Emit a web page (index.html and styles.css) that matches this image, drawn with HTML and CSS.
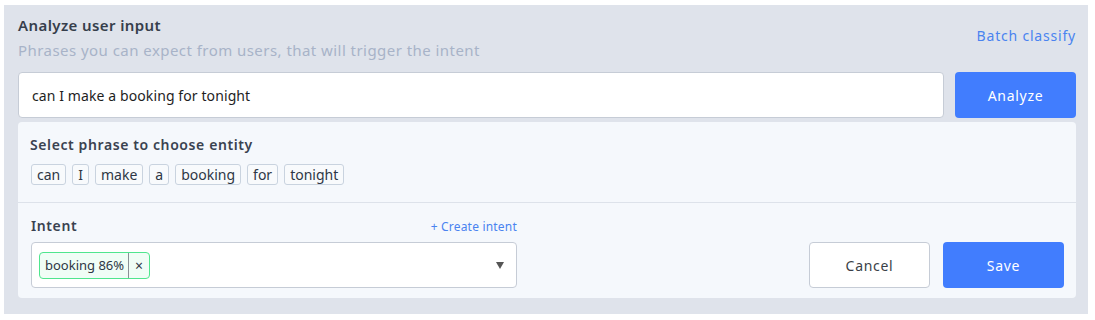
FILE: index.html
```html
<!DOCTYPE html>
<html lang="en">
<head>
  <meta charset="UTF-8">
  <title>Analyze user input</title>
  <link rel="stylesheet" href="styles.css">
</head>
<body>
  <div class="panel">
    <div class="panel-head">
      <div>
        <h2 class="title">Analyze user input</h2>
        <p class="subtitle">Phrases you can expect from users, that will trigger the intent</p>
      </div>
      <a class="link batch" href="#">Batch classify</a>
    </div>

    <div class="analyze-row">
      <input class="phrase-input" type="text" value="can I make a booking for tonight">
      <button class="btn btn-primary">Analyze</button>
    </div>

    <div class="card">
      <div class="card-section">
        <h3 class="label">Select phrase to choose entity</h3>
        <div class="tokens">
          <span class="token">can</span>
          <span class="token">I</span>
          <span class="token">make</span>
          <span class="token">a</span>
          <span class="token">booking</span>
          <span class="token">for</span>
          <span class="token">tonight</span>
        </div>
      </div>

      <div class="card-section intent-section">
        <div class="intent-field">
          <div class="intent-head">
            <h3 class="label">Intent</h3>
            <a class="link create" href="#">+ Create intent</a>
          </div>
          <div class="select">
            <span class="chip">
              <span class="chip-text">booking 86%</span>
              <span class="chip-x">&times;</span>
            </span>
            <span class="caret"></span>
          </div>
        </div>
        <div class="actions">
          <button class="btn btn-default">Cancel</button>
          <button class="btn btn-primary">Save</button>
        </div>
      </div>
    </div>
  </div>
</body>
</html>
```

FILE: styles.css
```css
body {
  margin: 0;
  background: #fff;
  font-family: "Noto Sans", "Open Sans", sans-serif;
  color: #2f3744;
}
.panel {
  margin: 5px 7px 7px 4px;
  padding: 10px 12px 16px 14px;
  background-color: #dfe3eb;
}
.panel-head {
  display: flex;
  justify-content: space-between;
  align-items: flex-end;
}
.title {
  margin: 0;
  font-size: 15px;
  line-height: 20px;
  font-weight: 600;
  letter-spacing: 0.4px;
  color: #363e4b;
}
.subtitle {
  margin: 5px 0 0;
  font-size: 15px;
  line-height: 20px;
  letter-spacing: 0.45px;
  color: #a8b3c8;
}
.link {
  color: #4a83f0;
  text-decoration: none;
}
.batch {
  font-size: 14px;
  line-height: 20px;
  letter-spacing: 0.8px;
  margin-bottom: 14px;
}
.analyze-row {
  display: flex;
  gap: 11px;
  margin-top: 12px;
}
.phrase-input {
  flex: 1;
  height: 46px;
  box-sizing: border-box;
  padding: 0 13px;
  border: 1px solid #c6ccd6;
  border-radius: 4px;
  background: #fff;
  font-family: inherit;
  font-size: 14px;
  letter-spacing: 0.1px;
  color: #1e1e1e;
}
.btn {
  width: 121px;
  height: 46px;
  border-radius: 4px;
  font-family: inherit;
  font-size: 14px;
  letter-spacing: 0.7px;
  cursor: pointer;
}
.btn-primary {
  border: none;
  background-color: #417dfe;
  color: #fff;
}
.btn-default {
  border: 1px solid #c6ccd6;
  background-color: #fff;
  color: #3a3f47;
}
.card {
  margin-top: 4px;
  background-color: #f5f8fc;
  border-radius: 4px;
}
.card-section {
  padding: 13px 12px 17px;
}
.card-section + .card-section {
  border-top: 1px solid #dde2ea;
}
.label {
  margin: 0;
  font-size: 14px;
  line-height: 20px;
  font-weight: 600;
  letter-spacing: 0.6px;
  color: #3a4250;
}
.tokens {
  display: flex;
  gap: 6px;
  margin-top: 9px;
  padding-left: 1px;
}
.token {
  height: 21px;
  box-sizing: border-box;
  padding: 0 5px;
  border: 1px solid #c9d3df;
  border-radius: 3px;
  background: #f8fafc;
  font-size: 14px;
  line-height: 19px;
  color: #2e3745;
}
.intent-section {
  display: flex;
  justify-content: space-between;
  align-items: flex-end;
  padding-top: 13px;
  padding-bottom: 10px;
}
.intent-field {
  width: 487px;
}
.intent-head {
  display: flex;
  justify-content: space-between;
  align-items: center;
  margin-bottom: 6px;
  padding-left: 1px;
}
.create {
  font-size: 12px;
  letter-spacing: 0.2px;
}
.select {
  display: flex;
  align-items: center;
  justify-content: space-between;
  height: 46px;
  box-sizing: border-box;
  margin-left: 1px;
  padding: 0 12px 0 7px;
  border: 1px solid #c6ccd6;
  border-radius: 4px;
  background: #fff;
}
.chip {
  display: flex;
  height: 27px;
  box-sizing: border-box;
  border: 1px solid #4fe68e;
  border-radius: 4px;
  background: #f0fdf6;
  font-size: 13px;
  line-height: 25px;
  color: #2e3745;
}
.chip-text {
  padding: 0 4px 0 5px;
  border-right: 1px solid #8a8f96;
}
.chip-x {
  padding: 0 6px 0 6px;
  font-size: 14px;
}
.caret {
  width: 0;
  height: 0;
  border-left: 4px solid transparent;
  border-right: 4px solid transparent;
  border-top: 7px solid #555;
}
.actions {
  display: flex;
  gap: 13px;
}
```
